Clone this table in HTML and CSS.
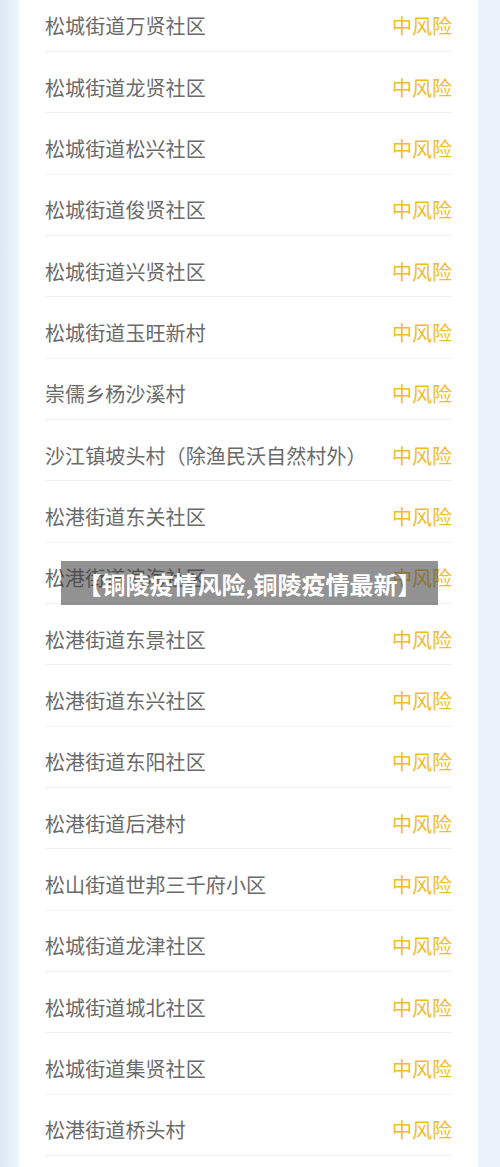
FILE: index.html
```html
<!DOCTYPE html>
<html lang="zh-CN">
<head>
    <meta charset="UTF-8">
    <meta name="viewport" content="width=device-width, initial-scale=1.0">
    <title>铜陵疫情风险,铜陵疫情最新</title>
    <link rel="stylesheet" href="styles.css">
</head>
<body>
    <div class="page">
        <div class="card">
            <ul class="list">
                <li class="row"><span class="name">松城街道万贤社区</span><span class="level">中风险</span></li>
                <li class="row"><span class="name">松城街道龙贤社区</span><span class="level">中风险</span></li>
                <li class="row"><span class="name">松城街道松兴社区</span><span class="level">中风险</span></li>
                <li class="row"><span class="name">松城街道俊贤社区</span><span class="level">中风险</span></li>
                <li class="row"><span class="name">松城街道兴贤社区</span><span class="level">中风险</span></li>
                <li class="row"><span class="name">松城街道玉旺新村</span><span class="level">中风险</span></li>
                <li class="row"><span class="name">崇儒乡杨沙溪村</span><span class="level">中风险</span></li>
                <li class="row"><span class="name">沙江镇坡头村（除渔民沃自然村外）</span><span class="level">中风险</span></li>
                <li class="row"><span class="name">松港街道东关社区</span><span class="level">中风险</span></li>
                <li class="row"><span class="name">松港街道滨海社区</span><span class="level">中风险</span></li>
                <li class="row"><span class="name">松港街道东景社区</span><span class="level">中风险</span></li>
                <li class="row"><span class="name">松港街道东兴社区</span><span class="level">中风险</span></li>
                <li class="row"><span class="name">松港街道东阳社区</span><span class="level">中风险</span></li>
                <li class="row"><span class="name">松港街道后港村</span><span class="level">中风险</span></li>
                <li class="row"><span class="name">松山街道世邦三千府小区</span><span class="level">中风险</span></li>
                <li class="row"><span class="name">松城街道龙津社区</span><span class="level">中风险</span></li>
                <li class="row"><span class="name">松城街道城北社区</span><span class="level">中风险</span></li>
                <li class="row"><span class="name">松城街道集贤社区</span><span class="level">中风险</span></li>
                <li class="row"><span class="name">松港街道桥头村</span><span class="level">中风险</span></li>
            </ul>
        </div>
    </div>
    <div class="caption">【铜陵疫情风险,铜陵疫情最新】</div>
</body>
</html>
```

FILE: styles.css
```css
body {
    margin: 0;
    font-family: "Noto Sans CJK SC", "Noto Sans", sans-serif;
    background-color: #eaf3fb;
    overflow: hidden;
}
.page {
    height: 1167px;
    display: flex;
    background: linear-gradient(to right, #dce8f4 0, #e3eef8 8px, #edf4fb 18px, #eaf3fb 19px);
    padding-right: 22px;
    padding-left: 19px;
}
.card {
    flex: 1;
    background-color: #fff;
    padding: 0 26px;
}
.list {
    list-style: none;
    margin: -9.33px 0 0 0;
    padding: 0;
}
.row {
    display: flex;
    justify-content: space-between;
    align-items: center;
    box-sizing: border-box;
    height: 61.33px;
    padding-top: 11px;
    border-bottom: 1px solid #f0f1f3;
    font-size: 20px;
    line-height: 1;
}
.name {
    color: #6a6a6a;
    letter-spacing: 0.1px;
}
.level {
    color: #f1bc2a;
}
.caption {
    position: absolute;
    top: 561px;
    left: 61px;
    width: 377px;
    height: 44px;
    display: flex;
    align-items: center;
    justify-content: center;
    background-color: rgba(60, 60, 60, 0.56);
    color: #fff;
    font-size: 24px;
    font-weight: bold;
    white-space: nowrap;
}
```
